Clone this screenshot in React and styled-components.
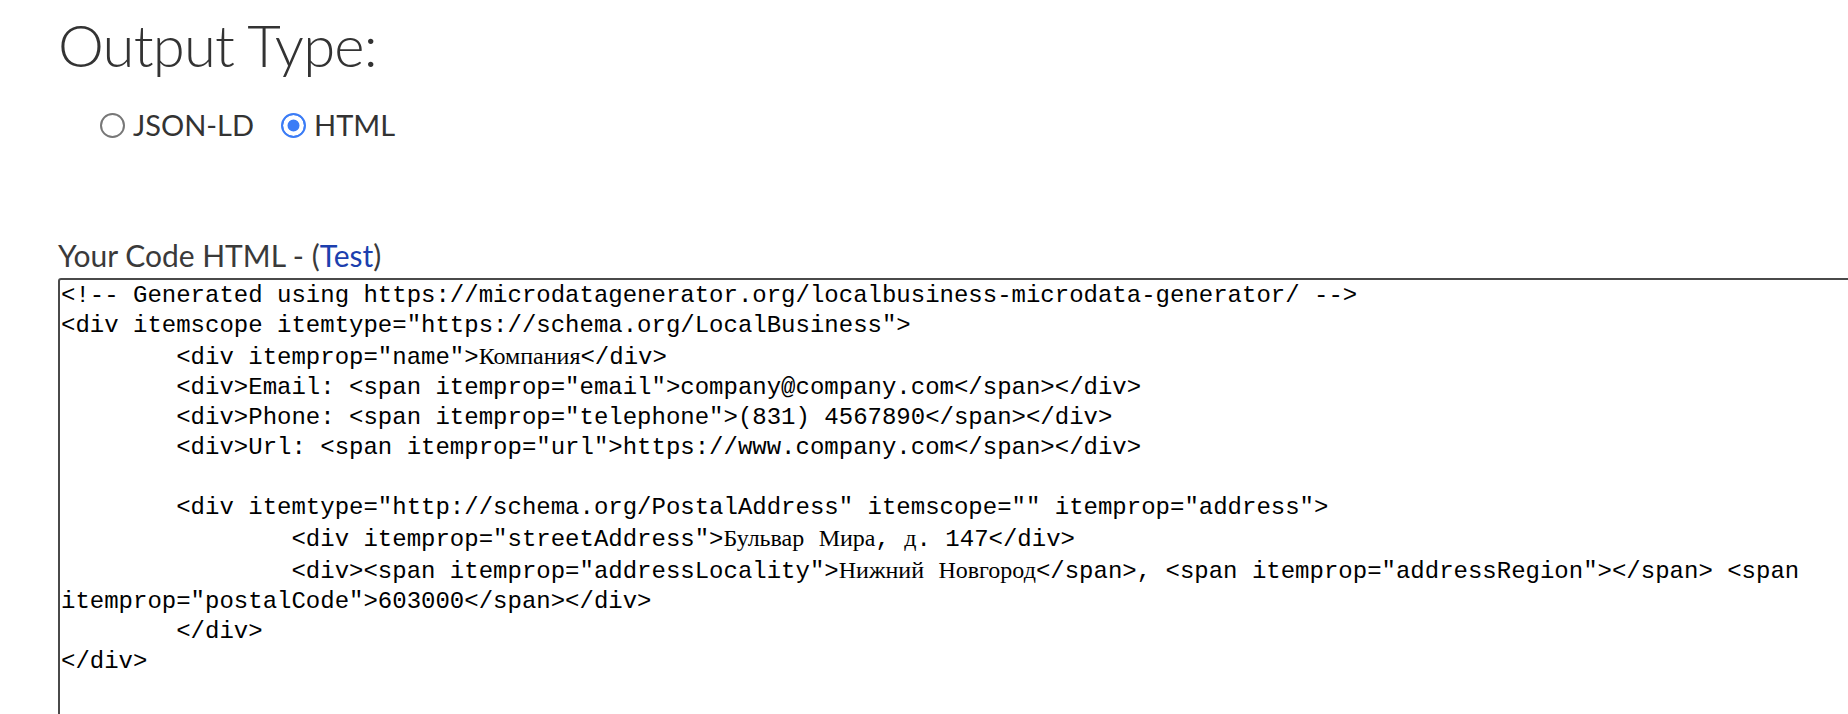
import { useState } from "react";
import styled, { createGlobalStyle } from "styled-components";

const GlobalStyle = createGlobalStyle`
  html,
  body {
    margin: 0;
    padding: 0;
    background: #fff;
    overflow: hidden;
  }

  body {
    font-family: Lato, "Open Sans", sans-serif;
    color: #333;
  }
`;

const Page = styled.div`
  padding: 9px 0 0 58px;
`;

const Title = styled.h2`
  margin: 0;

  font-size: 58px;
  font-weight: 300;
  line-height: 72px;
  letter-spacing: -0.8px;

  color: #333;
`;

const RadioGroup = styled.div`
  display: flex;
  align-items: center;

  padding-left: 42px;
  margin-top: 26px;

  height: 36px;
`;

const RadioLabel = styled.label`
  display: flex;
  align-items: center;
  gap: 8px;

  margin-right: 27px;

  font-size: 29px;
  line-height: 36px;

  color: #333;

  cursor: pointer;
`;

const Radio = styled.input`
  appearance: none;
  -webkit-appearance: none;

  margin: 0;

  width: 25px;
  height: 25px;

  border-radius: 50%;
  border: 2px solid #777;
  background: #fff;

  cursor: pointer;

  &:checked {
    border-color: #3b7cf6;
    background: #3b7cf6;
    box-shadow: inset 0 0 0 4.5px #fff;
  }
`;

const CodeLabel = styled.div`
  margin-top: 95px;

  font-size: 30px;
  line-height: 34px;

  color: #3a3a3a;

  a {
    color: #1c3fae;
    text-decoration: none;
  }
`;

const CodeBox = styled.div`
  box-sizing: border-box;

  width: 1840px;
  height: 520px;

  margin-top: 6px;
  padding: 1px 1px;

  border: 2px solid #4a4a4a;
  border-radius: 3px;

  font-family: "Liberation Mono", "DejaVu Sans Mono", monospace;
  font-size: 24px;
  line-height: 30px;

  color: #000;

  white-space: pre-wrap;
  tab-size: 8;
  -moz-tab-size: 8;
`;

const Cyr = styled.span`
  font-family: "Liberation Serif", "DejaVu Serif", serif;
`;

const code = [
  "<!-- Generated using https://microdatagenerator.org/localbusiness-microdata-generator/ -->",
  '<div itemscope itemtype="https://schema.org/LocalBusiness">',
  '\t<div itemprop="name">Компания</div>',
  '\t<div>Email: <span itemprop="email">company@company.com</span></div>',
  '\t<div>Phone: <span itemprop="telephone">(831) 4567890</span></div>',
  '\t<div>Url: <span itemprop="url">https://www.company.com</span></div>',
  "",
  '\t<div itemtype="http://schema.org/PostalAddress" itemscope="" itemprop="address">',
  '\t\t<div itemprop="streetAddress">Бульвар Мира, д. 147</div>',
  '\t\t<div><span itemprop="addressLocality">Нижний Новгород</span>, <span itemprop="addressRegion"></span> <span itemprop="postalCode">603000</span></div>',
  "\t</div>",
  "</div>",
].join("\n");

const renderCode = (text) =>
  text
    .split(/([А-Яа-яЁё]+)/)
    .map((part, i) =>
      /[А-Яа-яЁё]/.test(part) ? <Cyr key={i}>{part}</Cyr> : part
    );

const App = () => {
  const [type, setType] = useState("html");

  return (
    <Page>
      <GlobalStyle />
      <Title>Output Type:</Title>
      <RadioGroup>
        <RadioLabel>
          <Radio
            type="radio"
            name="output"
            checked={type === "json"}
            onChange={() => setType("json")}
          />
          JSON-LD
        </RadioLabel>
        <RadioLabel>
          <Radio
            type="radio"
            name="output"
            checked={type === "html"}
            onChange={() => setType("html")}
          />
          HTML
        </RadioLabel>
      </RadioGroup>
      <CodeLabel>
        Your Code HTML - (<a href="#test">Test</a>)
      </CodeLabel>
      <CodeBox>{renderCode(code)}</CodeBox>
    </Page>
  );
};

export default App;
